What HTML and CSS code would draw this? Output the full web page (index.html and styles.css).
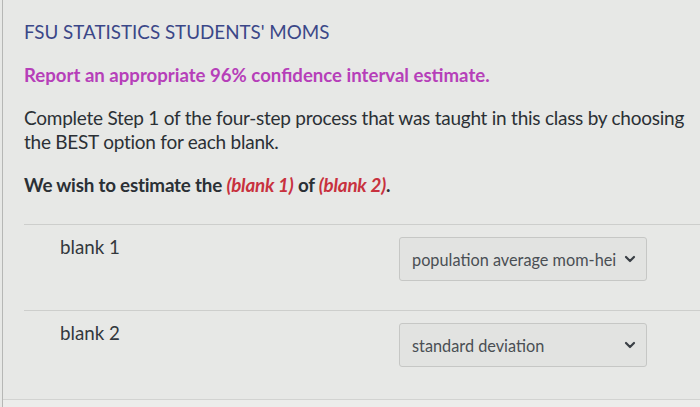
FILE: index.html
```html
<!DOCTYPE html>
<html>
<head>
<meta charset="utf-8">
<link rel="stylesheet" href="styles.css">
</head>
<body>
<div class="page">
  <div class="content">
    <h1 class="title">FSU STATISTICS STUDENTS' MOMS</h1>
    <p class="report">Report an appropriate 96% confidence interval estimate.</p>
    <p class="para">Complete Step 1 of the four-step process that was taught in this class by choosing the BEST option for each blank.</p>
    <p class="wish">We wish to estimate the <em class="blank">(blank 1)</em> of <em class="blank">(blank 2)</em>.</p>
    <div class="rows">
      <div class="row row-first">
        <span class="label">blank 1</span>
        <div class="select">
          <span class="value">population average mom-height</span>
          <svg class="chev" width="12" height="8" viewBox="0 0 12 8"><path d="M2 2 L6 6 L10 2" fill="none" stroke="#3a3f45" stroke-width="2.2" stroke-linecap="round" stroke-linejoin="round"/></svg>
        </div>
      </div>
      <div class="row">
        <span class="label">blank 2</span>
        <div class="select">
          <span class="value">standard deviation</span>
          <svg class="chev" width="12" height="8" viewBox="0 0 12 8"><path d="M2 2 L6 6 L10 2" fill="none" stroke="#3a3f45" stroke-width="2.2" stroke-linecap="round" stroke-linejoin="round"/></svg>
        </div>
      </div>
    </div>
  </div>
  <div class="bottom"></div>
</div>
</body>
</html>
```

FILE: styles.css
```css
html, body {
  margin: 0;
  padding: 0;
  background: #e7e8e6;
}
body {
  font-family: Lato, "Open Sans", sans-serif;
  color: #2e3338;
  width: 700px;
  height: 407px;
  overflow: hidden;
}
.page {
  margin-left: 2px;
  border-left: 1px solid #b6b7b5;
  height: 407px;
  display: flex;
  flex-direction: column;
  box-sizing: border-box;
}
.content {
  flex: 1;
  padding: 20px 0 0 21px;
}
.title {
  margin: 0;
  font-size: 18.8px;
  font-weight: 400;
  line-height: 24px;
  color: #3b4788;
}
.report {
  margin: 19px 0 0;
  font-size: 18.6px;
  font-weight: 700;
  line-height: 24px;
  color: #b63fb9;
}
.para {
  margin: 19px 0 0;
  width: 672px;
  font-size: 19px;
  line-height: 24px;
  color: #2b3035;
  letter-spacing: -0.25px;
}
.wish {
  margin: 19px 0 0;
  font-size: 18.8px;
  font-weight: 700;
  line-height: 24px;
  color: #2b3035;
  letter-spacing: -0.2px;
}
.blank {
  color: #c8313e;
  font-style: italic;
}
.rows {
  margin-top: 27px;
}
.row {
  display: grid;
  grid-template-columns: 375px 248px;
  border-top: 1px solid #cdcecc;
  height: 86px;
  padding-top: 10px;
  box-sizing: border-box;
}
.label {
  padding-left: 36px;
  font-size: 18.8px;
  line-height: 24px;
  color: #33383d;
}
.select {
  margin-top: 2px;
  height: 44px;
  box-sizing: border-box;
  border: 1px solid #c6c7c5;
  border-radius: 3px;
  background: #e2e3e1;
  display: flex;
  align-items: center;
  padding: 0 10px 0 12px;
  gap: 8px;
}
.value {
  flex: 1;
  font-size: 16.3px;
  color: #4a4f54;
  white-space: nowrap;
  overflow: hidden;
}
.chev {
  flex: none;
}
.bottom {
  height: 7px;
  border-top: 1px solid #d2d3d1;
  background: #ecedeb;
}
```
